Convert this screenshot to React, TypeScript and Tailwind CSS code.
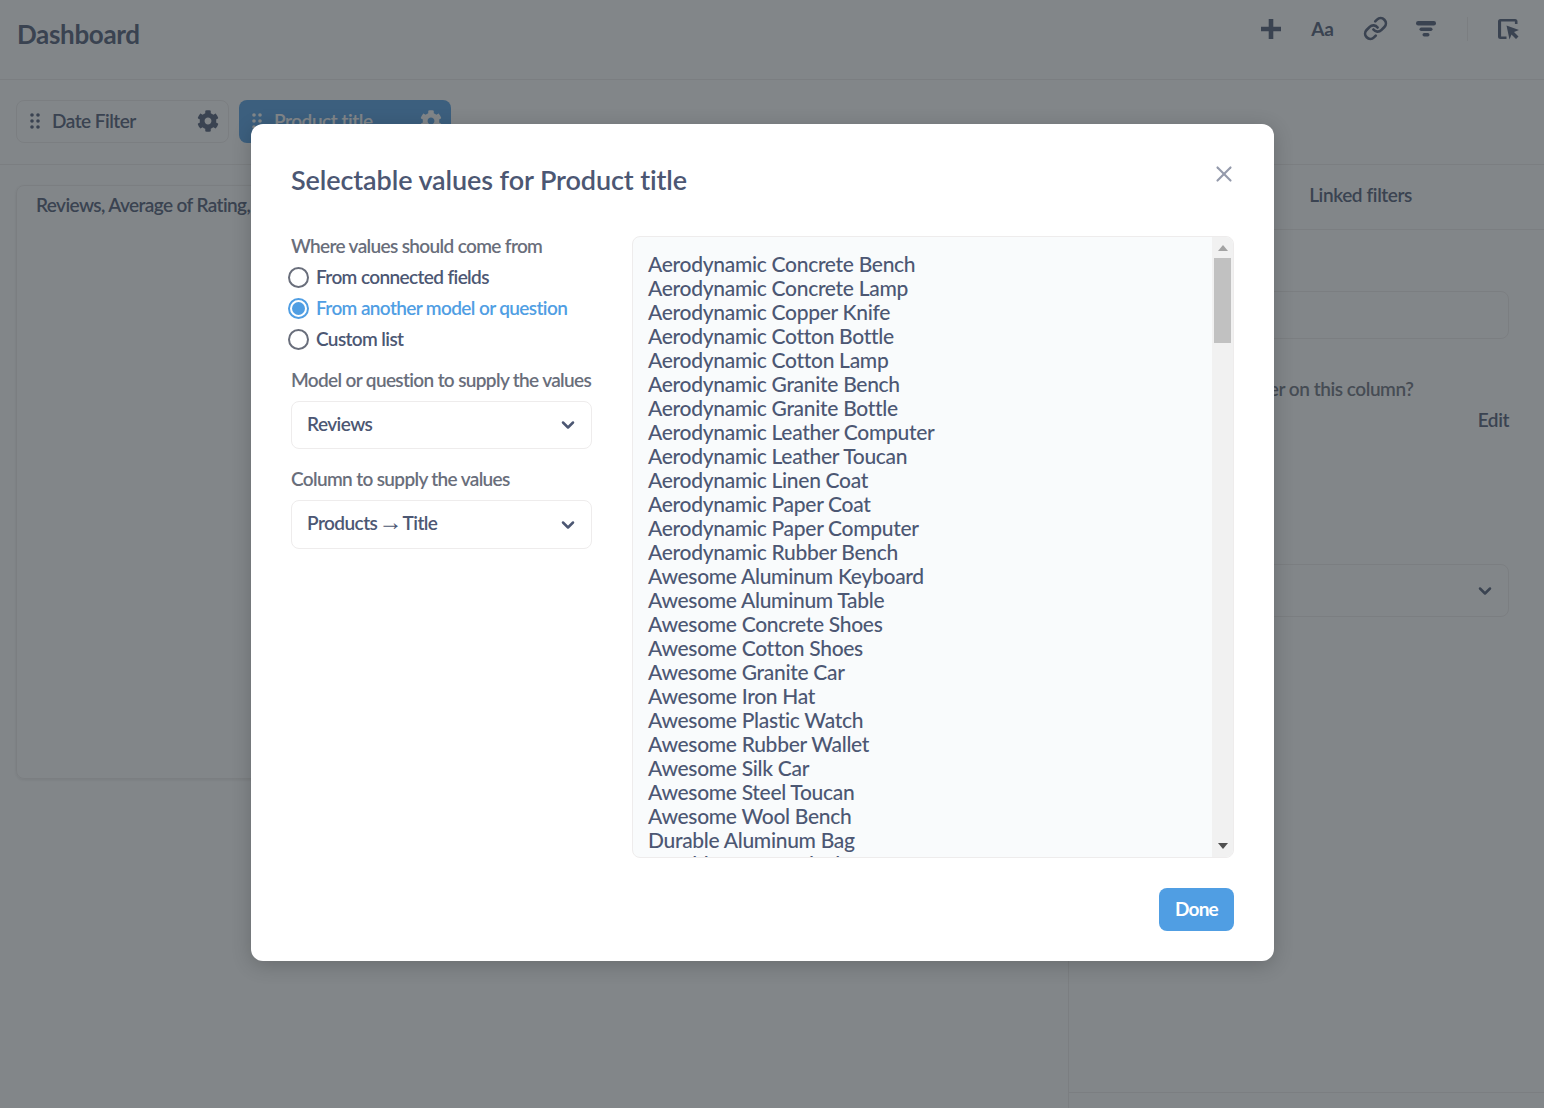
import { ChevronDown, Link, X } from "lucide-react";

const products = [
  "Aerodynamic Concrete Bench",
  "Aerodynamic Concrete Lamp",
  "Aerodynamic Copper Knife",
  "Aerodynamic Cotton Bottle",
  "Aerodynamic Cotton Lamp",
  "Aerodynamic Granite Bench",
  "Aerodynamic Granite Bottle",
  "Aerodynamic Leather Computer",
  "Aerodynamic Leather Toucan",
  "Aerodynamic Linen Coat",
  "Aerodynamic Paper Coat",
  "Aerodynamic Paper Computer",
  "Aerodynamic Rubber Bench",
  "Awesome Aluminum Keyboard",
  "Awesome Aluminum Table",
  "Awesome Concrete Shoes",
  "Awesome Cotton Shoes",
  "Awesome Granite Car",
  "Awesome Iron Hat",
  "Awesome Plastic Watch",
  "Awesome Rubber Wallet",
  "Awesome Silk Car",
  "Awesome Steel Toucan",
  "Awesome Wool Bench",
  "Durable Aluminum Bag",
  "Durable Copper Clock",
];

const Grip = ({ className }: { className: string }) => (
  <svg viewBox="0 0 10 16" className={className} fill="currentColor">
    <circle cx="2" cy="2" r="1.8" />
    <circle cx="8" cy="2" r="1.8" />
    <circle cx="2" cy="8" r="1.8" />
    <circle cx="8" cy="8" r="1.8" />
    <circle cx="2" cy="14" r="1.8" />
    <circle cx="8" cy="14" r="1.8" />
  </svg>
);

const Gear = ({ className }: { className: string }) => (
  <svg viewBox="0 0 512 512" className={className} fill="currentColor">
    <path d="M487.4 315.7l-42.6-24.6c4.3-23.2 4.3-47 0-70.2l42.6-24.6c4.9-2.8 7.1-8.6 5.5-14-11.1-35.6-30-67.8-54.7-94.6-3.8-4.1-10-5.1-14.8-2.3L380.8 110c-17.9-15.4-38.5-27.3-60.8-35.1V25.8c0-5.6-3.9-10.5-9.4-11.7-36.7-8.2-74.3-7.8-109.2 0-5.5 1.2-9.4 6.1-9.4 11.7V75c-22.2 7.9-42.8 19.8-60.8 35.1L88.7 85.5c-4.9-2.8-11-1.9-14.8 2.3-24.7 26.7-43.6 58.9-54.7 94.6-1.7 5.4.6 11.2 5.5 14L67.3 221c-4.3 23.2-4.3 47 0 70.2l-42.6 24.6c-4.9 2.8-7.1 8.6-5.5 14 11.1 35.6 30 67.8 54.7 94.6 3.8 4.1 10 5.1 14.8 2.3l42.6-24.6c17.9 15.4 38.5 27.3 60.8 35.1v49.2c0 5.6 3.9 10.5 9.4 11.7 36.7 8.2 74.3 7.8 109.2 0 5.5-1.2 9.4-6.1 9.4-11.7v-49.2c22.2-7.9 42.8-19.8 60.8-35.1l42.6 24.6c4.9 2.8 11 1.9 14.8-2.3 24.7-26.7 43.6-58.9 54.7-94.6 1.5-5.5-.7-11.3-5.6-14.1zM256 336c-44.1 0-80-35.9-80-80s35.9-80 80-80 80 35.9 80 80-35.9 80-80 80z" />
  </svg>
);

const Radio = ({ label, checked }: { label: string; checked?: boolean }) => (
  <div className="flex h-[31px] items-center">
    {checked ? (
      <span className="ml-[-3px] flex h-[21px] w-[21px] items-center justify-center rounded-full border-2 border-[#509ee3] bg-white">
        <span className="h-[13px] w-[13px] rounded-full bg-[#509ee3]" />
      </span>
    ) : (
      <span className="ml-[-3px] h-[21px] w-[21px] rounded-full border-2 border-[#696e7b] bg-white" />
    )}
    <span className={`ml-[7px] text-[19px] font-semibold tracking-[-0.62px] ${checked ? "text-[#509ee3]" : "text-[#4c5773]"}`}>
      {label}
    </span>
  </div>
);

const Select = ({ value, className }: { value: React.ReactNode; className: string }) => (
  <div className={`flex w-[301px] items-center justify-between rounded-lg border border-[#eeecec] pl-[15px] pr-[13px] text-[19px] font-semibold tracking-[-0.55px] text-[#4c5773] ${className}`}>
    <span className="pb-[2px]">{value}</span>
    <ChevronDown className="h-5 w-5 text-[#4c5773]" strokeWidth={3} />
  </div>
);

export default function App() {
  return (
    <div className="relative h-[1108px] w-[1544px] overflow-hidden bg-white font-['Lato','Noto_Sans',sans-serif] text-[#2e353b]">
      <header className="flex h-20 items-start justify-between border-b border-[#eeecec] pl-[17px] pr-[24px]">
        <h1 className="mt-[15px] text-[26px] font-bold tracking-[-0.33px] text-[#4c5773]">Dashboard</h1>
        <div className="mt-4 flex items-center text-[#4c5773]">
          <svg viewBox="0 0 22 22" className="h-[22px] w-[22px]" fill="currentColor">
            <path d="M8.7 1h4.600v7.700H21v4.600h-7.700V21H8.700V13.300H1V8.700h7.700z" />
          </svg>
          <span className="ml-[29px] text-[19px] font-bold leading-6">Aa</span>
          <Link className="ml-[29px] h-[25px] w-[25px]" strokeWidth={2.6} />
          <svg viewBox="0 0 22 18" className="ml-[27px] h-[18px] w-[22px]" fill="currentColor">
            <rect x="1" y="1" width="20" height="4.500" rx="2.200" />
            <rect x="4.500" y="7.500" width="13" height="3.500" rx="1.700" />
            <rect x="7.500" y="13" width="7" height="3.500" rx="1.700" />
          </svg>
          <div className="ml-[30px] h-6 w-px bg-[#eeecec]" />
          <svg viewBox="0 0 24 24" className="ml-[28px] h-6 w-6" fill="currentColor">
            <path d="M4.500 2h14.500a2.500 2.500 0 0 1 2.500 2.500v2.500h-2.600V4.600H5.100v14.800h5.400V22H4.500A2.500 2.500 0 0 1 2 19.500v-15A2.500 2.500 0 0 1 4.500 2z" />
            <path d="M10.500 8.500l12.500 4.500-5 2 4.500 4.500-2.500 2.500-4.500-4.500-2 5z" />
          </svg>
        </div>
      </header>
      <div className="flex h-[85px] items-center gap-[10px] border-b border-[#eeecec] pb-[2px] pl-4">
        <div className="flex h-[43px] w-[213px] items-center rounded-lg border border-[#eeecec] pl-[13px] pr-[9px]">
          <Grip className="h-4 w-[10px] text-[#4c5773]" />
          <span className="ml-[12px] flex-1 text-[19px] font-semibold tracking-[-0.5px] text-[#4c5773]">Date Filter</span>
          <Gear className="h-[22px] w-[22px] text-[#4c5773]" />
        </div>
        <div className="flex h-[43px] w-[212px] items-center rounded-lg bg-[#509ee3] pl-[13px] pr-[9px] text-white">
          <Grip className="h-4 w-[10px]" />
          <span className="ml-[12px] flex-1 text-[19px] font-semibold tracking-[-0.45px]">Product title</span>
          <Gear className="h-[22px] w-[22px]" />
        </div>
      </div>
      <div className="flex h-[943px]">
        <main className="w-[1068px] pl-4 pr-5 pt-5">
          <div className="h-[594px] rounded-lg border border-[#eeecec] pl-[19px] pt-[5px] shadow-[0_1px_3px_rgba(0,0,0,0.1)]">
            <p className="text-[19px] font-semibold tracking-[-0.6px] text-[#4c5773]">Reviews, Average of Rating, Grouped by Title</p>
          </div>
        </main>
        <aside className="flex flex-1 flex-col border-l border-[#eeecec]">
          <div className="flex h-[65px] shrink-0 items-center justify-end border-b border-[#eeecec] pb-1 pr-[132px] text-[19px] font-semibold tracking-[-0.4px] text-[#4c5773]">
            Linked filters
          </div>
          <div className="ml-5 mr-[35px] mt-[61px] h-[48px] shrink-0 rounded-lg border border-[#eeecec]" />
          <p className="ml-5 mt-[38px] text-[19px] font-semibold leading-6 tracking-[-0.45px] text-[#696e7b]">How should people filter on this column?</p>
          <p className="mr-[35px] mt-[7px] text-right text-[19px] font-semibold leading-6 tracking-[-0.4px] text-[#4c5773]">Edit</p>
          <div className="ml-5 mr-[35px] mt-[132px] flex h-[53px] shrink-0 items-center justify-end rounded-lg border border-[#eeecec] pr-[13px]">
            <ChevronDown className="h-5 w-5 text-[#4c5773]" strokeWidth={3} />
          </div>
          <div className="mt-[475px] shrink-0 border-t border-[#eeecec]" />
        </aside>
      </div>

      <div className="absolute inset-0 bg-[#2e353b]/60" />

      <div className="absolute left-[251px] top-[124px] flex h-[837px] w-[1023px] flex-col rounded-xl bg-white px-10 pt-[28px] shadow-[0_4px_20px_rgba(0,0,0,0.2)]">
        <div className="flex items-start justify-between">
          <h2 className="text-[27px] font-semibold leading-[56px] tracking-[-0.1px] text-[#4c5773]">Selectable values for Product title</h2>
          <X className="mr-[-3px] mt-[9px] h-[26px] w-[26px] text-[#949aab]" strokeWidth={2} />
        </div>
        <div className="mt-[28px] flex">
          <div className="w-[341px]">
            <p className="mt-[-2px] text-[19px] font-semibold leading-[24px] tracking-[-0.65px] text-[#696e7b]">Where values should come from</p>
            <div className="mt-1">
              <Radio label="From connected fields" />
              <Radio label="From another model or question" checked />
              <Radio label="Custom list" />
            </div>
            <p className="mt-[13px] text-[19px] font-semibold leading-[24px] tracking-[-0.65px] text-[#696e7b]">Model or question to supply the values</p>
            <Select value="Reviews" className="mt-[9px] h-[48px]" />
            <p className="mt-[18px] text-[19px] font-semibold leading-[24px] tracking-[-0.65px] text-[#696e7b]">Column to supply the values</p>
            <Select
              value={
                <>
                  Products <span className="mx-[-3px] font-['Liberation_Sans',sans-serif] text-[24px] font-normal leading-none">→</span> Title
                </>
              }
              className="mt-[9px] h-[49px]"
            />
          </div>
          <div className="relative h-[622px] w-[602px] overflow-hidden rounded-lg border border-[#eeecec] bg-[#f9fbfc]">
            <div className="pl-[15px] pt-[15px] text-[21px] font-medium leading-[24px] tracking-[-0.3px] text-[#4c5773]">
              {products.map((p) => (
                <div key={p}>{p}</div>
              ))}
            </div>
            <div className="absolute bottom-0 right-0 top-0 flex w-[21px] flex-col items-center bg-[#f1f1f1]">
              <svg viewBox="0 0 10 6" className="mt-2 h-[6px] w-[10px] text-[#a3a3a3]" fill="currentColor">
                <path d="M5 0l5 6H0z" />
              </svg>
              <div className="mt-[7px] h-[85px] w-[17px] bg-[#c1c1c1]" />
              <svg viewBox="0 0 10 6" className="mb-2 mt-auto h-[6px] w-[10px] text-[#505050]" fill="currentColor">
                <path d="M0 0h10L5 6z" />
              </svg>
            </div>
          </div>
        </div>
        <div className="mt-[30px] flex justify-end">
          <button className="h-[43px] w-[75px] rounded-lg bg-[#509ee3] text-[19px] font-bold tracking-[-0.8px] text-white">Done</button>
        </div>
      </div>
    </div>
  );
}
